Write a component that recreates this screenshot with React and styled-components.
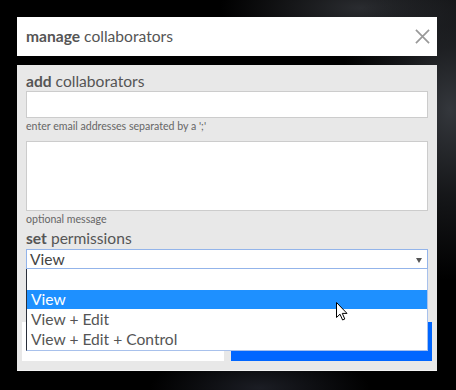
import React from 'react'
import styled, { createGlobalStyle } from 'styled-components'

const Global = createGlobalStyle`
  html, body {
    margin: 0;
    padding: 0;
    width: 456px;
    height: 390px;
    overflow: hidden;
    background:
      radial-gradient(ellipse 110px 170px at 450px 110px, #34373c 0%, rgba(36,38,42,0.6) 50%, rgba(0,0,0,0) 100%),
      radial-gradient(ellipse 140px 50px at 360px 8px, #2a2c30 0%, rgba(0,0,0,0) 100%),
      radial-gradient(ellipse 110px 35px at 260px 388px, #1b1d24 0%, rgba(0,0,0,0) 100%),
      #000;
    font-family: Lato, "Open Sans", sans-serif;
  }
`

function App() {
  const options = ['', 'View', 'View + Edit', 'View + Edit + Control']
  return (
    <>
      <Global />
      <Page>
        <Dialog>
          <Header>
            <Title><b>manage</b> collaborators</Title>
            <Close viewBox="0 0 16 16">
              <path d="M1 1 L15 15 M15 1 L1 15" />
            </Close>
          </Header>
          <Panel>
            <Label><b>add</b> collaborators</Label>
            <Input />
            <Hint>enter email addresses separated by a ';'</Hint>
            <TextArea />
            <Hint tight>optional message</Hint>
            <Label><b>set</b> permissions</Label>
            <SelectWrap>
              <Select>
                <span>View</span>
                <Caret />
              </Select>
              <Options>
                {options.map((o, i) => (
                  <Option key={i} selected={o === 'View'}>{o}</Option>
                ))}
              </Options>
            </SelectWrap>
            <Buttons>
              <Button />
              <Button primary />
            </Buttons>
          </Panel>
        </Dialog>
        <Cursor viewBox="0 0 12 19">
          <path d="M0.5 0.5 L0.5 15.5 L4 12.2 L6.6 18 L8.8 17 L6.3 11.4 L11 11.4 Z" />
        </Cursor>
      </Page>
    </>
  )
}

export default App

const Page = styled.div`
  position: relative;
  width: 456px;
  height: 390px;
  padding-top: 17px;
  box-sizing: border-box;
`

const Dialog = styled.div`
  margin-left: 17px;
  width: 420px;
  display: flex;
  flex-direction: column;
  gap: 9px;
`

const Header = styled.div`
  height: 39px;
  background: #fff;
  display: flex;
  align-items: center;
  justify-content: space-between;
  padding: 0 7px 0 9px;
  box-sizing: border-box;
`

const Title = styled.div`
  font-size: 15.6px;
  color: #555;
  padding-bottom: 1px;
  b {
    font-weight: 700;
  }
`

const Close = styled.svg`
  width: 15px;
  height: 15px;
  path {
    stroke: #999;
    stroke-width: 1.8;
    fill: none;
  }
`

const Panel = styled.div`
  background: #e8e8e8;
  border-bottom: 1px solid #f4f4f4;
  padding: 6px 9px 9px;
  display: flex;
  flex-direction: column;
`

const Label = styled.div`
  font-size: 15.6px;
  line-height: 20px;
  color: #555;
  b {
    font-weight: 700;
  }
`

const Input = styled.div`
  height: 27px;
  background: #fff;
  border: 1px solid #ccc;
  box-sizing: border-box;
`

const Hint = styled.div`
  font-size: 10.6px;
  line-height: 16px;
  color: #666;
  margin-bottom: ${p => (p.tight ? '1px' : '7px')};
`

const TextArea = styled.div`
  height: 70px;
  background: #fff;
  border: 1px solid #ccc;
  box-sizing: border-box;
`

const SelectWrap = styled.div`
  position: relative;
  margin-top: 1px;
`

const Select = styled.div`
  height: 20px;
  background: #fff;
  border: 1px solid #93b4ea;
  box-sizing: border-box;
  display: flex;
  align-items: center;
  justify-content: space-between;
  padding: 0 5px 0 3px;
  font-size: 15.6px;
  color: #444;
`

const Caret = styled.span`
  width: 0;
  height: 0;
  border-left: 3px solid transparent;
  border-right: 3px solid transparent;
  border-top: 5px solid #555;
  margin-top: 2px;
`

const Options = styled.div`
  position: absolute;
  top: 20px;
  left: 0;
  width: 402px;
  background: #fff;
  border-left: 1px solid #2a2f3a;
  border-right: 1px solid #a8c1ec;
  border-bottom: 1px solid #a8c1ec;
  box-sizing: border-box;
  padding: 1px 0 1px;
  z-index: 2;
`

const Option = styled.div`
  height: 20px;
  line-height: 20px;
  padding-left: 4px;
  font-size: 15.6px;
  color: ${p => (p.selected ? '#fff' : '#555')};
  background: ${p => (p.selected ? '#1e90ff' : 'transparent')};
  &:nth-child(2) {
    height: 19px;
    line-height: 19px;
  }
`

const Buttons = styled.div`
  display: flex;
  gap: 7px;
  margin: 53px -4px 0;
`

const Button = styled.div`
  flex: 1;
  height: 39px;
  background: ${p => (p.primary ? '#0066ff' : '#fff')};
`

const Cursor = styled.svg`
  position: absolute;
  left: 336px;
  top: 302px;
  width: 12px;
  height: 19px;
  z-index: 10;
  path {
    fill: #fff;
    stroke: #000;
    stroke-width: 1;
  }
`
